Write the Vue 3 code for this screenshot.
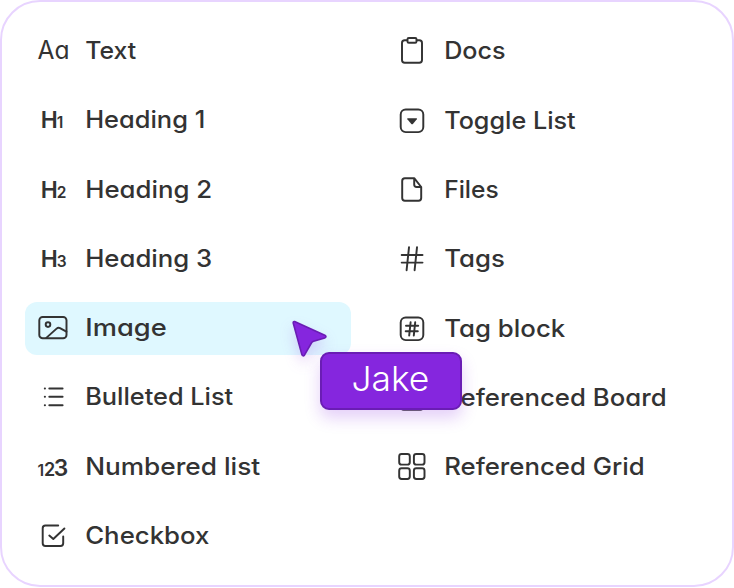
<script setup>
const columns = [
  [
    { icon: 'text', label: 'Text', width: 51 },
    { icon: 'heading', level: 1, label: 'Heading 1', width: 120 },
    { icon: 'heading', level: 2, label: 'Heading 2', width: 127 },
    { icon: 'heading', level: 3, label: 'Heading 3', width: 127 },
    { icon: 'image', label: 'Image', width: 81.5, active: true },
    { icon: 'bullets', label: 'Bulleted List', width: 148 },
    { icon: 'numbers', label: 'Numbered list', width: 175 },
    { icon: 'checkbox', label: 'Checkbox', width: 124.2 },
  ],
  [
    { icon: 'docs', label: 'Docs', width: 61.4 },
    { icon: 'toggle', label: 'Toggle List', width: 131.4 },
    { icon: 'file', label: 'Files', width: 54.5 },
    { icon: 'tags', label: 'Tags', width: 60.6 },
    { icon: 'tagblock', label: 'Tag block', width: 121 },
    { icon: 'board', label: 'Referenced Board', width: 222.4 },
    { icon: 'grid', label: 'Referenced Grid', width: 200.4 },
  ],
]
</script>

<template>
  <main class="card">
    <ul v-for="(items, c) in columns" :key="c" class="column">
      <li v-for="item in items" :key="item.label" class="row" :class="{ active: item.active }">
        <svg class="icon" viewBox="0 0 34 34" aria-hidden="true">
          <text v-if="item.icon === 'text'" class="aa" x="1.5" y="24.8" textLength="32" lengthAdjust="spacingAndGlyphs">Aa</text>
          <text v-else-if="item.icon === 'heading'" class="glyph" x="4.8" y="24.7"><tspan class="h">H</tspan><tspan class="sub" x="20.8">{{ item.level }}</tspan></text>
          <template v-else-if="item.icon === 'image'">
            <rect x="3.3" y="5.9" width="27.2" height="21.4" rx="3.4" />
            <circle cx="12" cy="13.6" r="2.3" />
            <path d="M10.3 26.9 20.6 17.6Q22.2 16.2 24 17.1L30.4 20.7" />
          </template>
          <path v-else-if="item.icon === 'bullets'" d="M13.3 8.4H26.6M13.3 16.8H26.6M13.3 25.2H26.6M8.8 8.4H9M8.8 16.8H9M8.8 25.2H9" />
          <text v-else-if="item.icon === 'numbers'" class="glyph" x="1.6" y="26"><tspan class="one">1</tspan><tspan class="two" x="8">2</tspan><tspan class="three" x="17.8">3</tspan></text>
          <path v-else-if="item.icon === 'checkbox'" d="M22.2 6.5H9.4Q6.7 6.5 6.7 9.2V24.2Q6.7 26.9 9.4 26.9H24.5Q27.2 26.9 27.2 24.2V17.4M13.3 16.6 17.3 20 28.4 9.5" />
          <template v-else-if="item.icon === 'docs'">
            <path d="M12 6.2H9.7Q7 6.2 7 8.9V26.1Q7 28.8 9.7 28.8H24.3Q27 28.8 27 26.1V8.9Q27 6.2 24.3 6.2H22" />
            <rect x="12.5" y="3.9" width="9" height="4.8" rx="1.3" />
          </template>
          <template v-else-if="item.icon === 'toggle'">
            <rect x="5.7" y="5.5" width="22.6" height="22.6" rx="5" />
            <path class="solid" d="M12.8 14.2H21.4Q22.5 14.2 21.8 15.2L18.1 19.8Q17.1 20.8 16.1 19.8L12.4 15.2Q11.7 14.2 12.8 14.2Z" />
          </template>
          <path v-else-if="item.icon === 'file'" d="M19.2 5.2H9.9Q7.2 5.2 7.2 7.9V25.1Q7.2 27.8 9.9 27.8H23.5Q26.2 27.8 26.2 25.1V14ZM19.2 5.2V11.5Q19.2 14 21.7 14H26.2" />
          <path v-else-if="item.icon === 'tags'" d="M6.7 13H27.5M6.7 20.6H27.5M14 5.3 11.6 28.2M22 5.3 19.6 28.2" />
          <template v-else-if="item.icon === 'tagblock'">
            <rect x="5.7" y="5.5" width="22.6" height="22.6" rx="5" />
            <path d="M11 13.7H23.2M10.7 19.3H22.8M15.6 10.3 14.2 23.5M20.2 10.3 18.8 23.5" />
          </template>
          <path v-else-if="item.icon === 'board'" d="M8.7 5H25.3Q28 5 28 7.7V26.1Q28 28.8 25.3 28.8H8.7Q6 28.8 6 26.1V7.7Q6 5 8.7 5ZM13.3 5V28.8M20.7 5V28.8" />
          <template v-else>
            <rect x="4.2" y="4" width="10.6" height="10.6" rx="2.4" />
            <rect x="18.9" y="4" width="10.6" height="10.6" rx="2.4" />
            <rect x="4.2" y="18.3" width="10.6" height="10.6" rx="2.4" />
            <rect x="18.9" y="18.3" width="10.6" height="10.6" rx="2.4" />
          </template>
        </svg>
        <svg class="label" width="240" height="34">
          <text x="-0.8" y="24.6" :textLength="item.width" lengthAdjust="spacingAndGlyphs">{{ item.label }}</text>
        </svg>
      </li>
    </ul>
    <svg class="cursor" width="42" height="44" viewBox="0 0 42 44" aria-hidden="true">
      <path d="M6.6 5.6 36.8 19.2Q39.2 20.8 36.7 21.9L25.6 25.3Q24.2 25.8 23.4 27L16.6 38.9Q14.8 41 13.8 38.4L5.2 7Q5 5.1 6.6 5.6Z" />
    </svg>
    <div class="name">
      <svg width="82" height="44">
        <text x="1.4" y="31.6" textLength="78" lengthAdjust="spacingAndGlyphs">Jake</text>
      </svg>
    </div>
  </main>
</template>

<style>
body {
  background: #fff;
}
</style>

<style scoped>
.card {
  position: relative;
  box-sizing: border-box;
  width: 734px;
  height: 587px;
  padding: 22.7px 22.5px;
  display: flex;
  gap: 33px;
  border: 2px solid #e8d4ff;
  border-radius: 40px;
  background: #fff;
  font-family: Inter, "Noto Sans", sans-serif;
}
.column {
  display: flex;
  flex-direction: column;
  gap: 16.33px;
  width: 326px;
  margin: 0;
  padding: 0;
  list-style: none;
}
.row {
  box-sizing: border-box;
  display: flex;
  align-items: center;
  gap: 16px;
  height: 53px;
  padding-left: 11.5px;
  border-radius: 12px;
}
.row.active {
  background: #dff8ff;
}
.icon {
  flex: none;
  width: 34px;
  height: 34px;
  fill: none;
  stroke: #333;
  stroke-width: 1.95;
  stroke-linecap: round;
  stroke-linejoin: round;
  overflow: visible;
}
.icon text,
.icon .solid {
  fill: #333;
  stroke: none;
}
.aa {
  font-size: 25px;
  font-feature-settings: "cv11";
}
.glyph {
  font-weight: 600;
}
.h {
  font-size: 22.8px;
}
.sub {
  font-size: 15.5px;
}
.one {
  font-size: 15.5px;
}
.two {
  font-size: 18px;
}
.three {
  font-size: 22.8px;
}
.label {
  flex: none;
  overflow: visible;
  fill: #333;
  font-size: 24px;
  font-weight: 500;
  font-feature-settings: "cv11";
}
.cursor {
  position: absolute;
  left: 286px;
  top: 314px;
  overflow: visible;
  fill: #8526de;
  stroke: #6a1db4;
  stroke-width: 1.6;
  stroke-linejoin: round;
  filter: drop-shadow(0 7px 7px rgba(133, 38, 222, 0.2));
}
.name {
  position: absolute;
  left: 318px;
  top: 350px;
  box-sizing: border-box;
  width: 142px;
  height: 58px;
  display: flex;
  align-items: center;
  justify-content: center;
  border: 2px solid #6a1db4;
  border-radius: 9px;
  background: #8526de;
  box-shadow: 0 8px 16px rgba(133, 38, 222, 0.22);
}
.name text {
  fill: #fff;
  font-size: 33.5px;
  font-weight: 350;
}
</style>
